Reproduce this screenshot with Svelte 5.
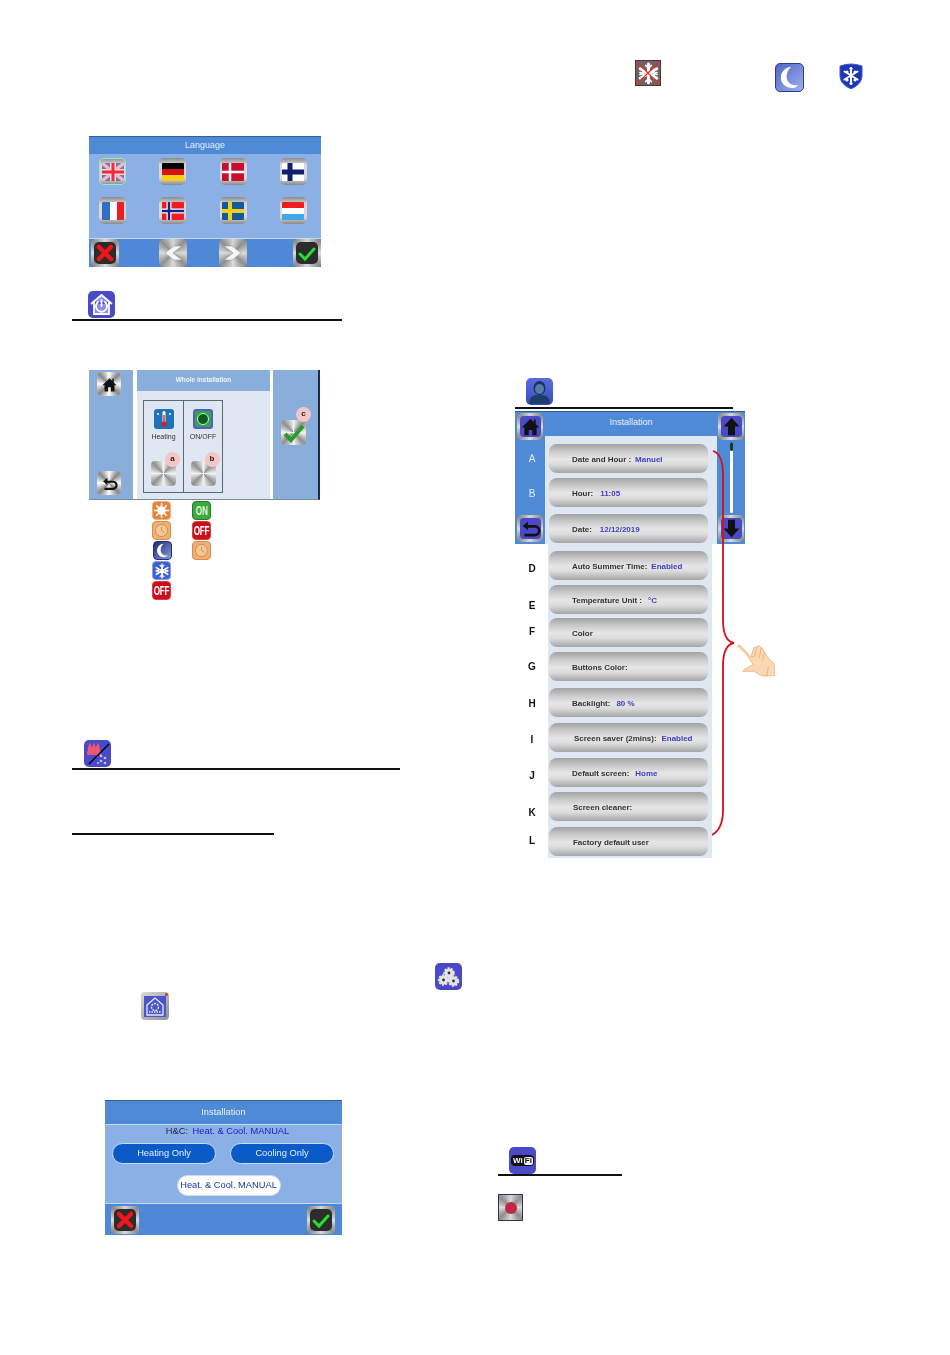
<script>
const flagsTop = ['uk', 'de', 'dk', 'fi']
const flagsBottom = ['fr', 'no', 'se', 'lu']

const rows = [
    {key: 'A', label: 'Date and Hour :', value: 'Manuel', gap: 0, dy: 0, light: true},
    {key: 'B', label: 'Hour:', value: '11:05', gap: 5, dy: 1, tab: 3, light: true},
    {key: 'C', label: 'Date:', value: '12/12/2019', gap: 7, dy: 0, tab: 4, noKey: true},
    {key: 'D', label: 'Auto Summer Time:', value: 'Enabled', gap: 8, dy: 3},
    {key: 'E', label: 'Temperature Unit :', value: '°C', gap: 5, dy: 6, tab: 2},
    {key: 'F', label: 'Color', gap: 4, dy: -1},
    {key: 'G', label: 'Buttons Color:', gap: 5, dy: 0},
    {key: 'H', label: 'Backlight:', value: '80 %', gap: 7, dy: 1, tab: 2},
    {key: 'I', label: 'Screen saver (2mins):', value: 'Enabled', gap: 6, dy: 2, pad: 25, tab: 1},
    {key: 'J', label: 'Default screen:', value: 'Home', gap: 6, dy: 3, tab: 2},
    {key: 'K', label: 'Screen cleaner:', gap: 5, dy: 6, pad: 24},
    {key: 'L', label: 'Factory default user', gap: 6, dy: -1, pad: 24},
]

const loose = [
    {kind: 'crossed', x: 635, y: 60, s: 26},
    {kind: 'moon', x: 775, y: 63, s: 29},
    {kind: 'shield', x: 838, y: 63, s: 26},
    {kind: 'power', x: 88, y: 291, s: 27},
    {kind: 'heatcool', x: 84, y: 740, s: 27},
    {kind: 'gears', x: 435, y: 963, s: 27},
    {kind: 'house', x: 141, y: 992, s: 28},
    {kind: 'user', x: 526, y: 378, s: 27},
    {kind: 'wifi', x: 509, y: 1147, s: 27},
]

const rules = [
    {x: 72, y: 319, w: 270},
    {x: 72, y: 768, w: 328},
    {x: 72, y: 833, w: 202},
    {x: 515, y: 407, w: 218},
    {x: 498, y: 1174, w: 124},
]
</script>

{#snippet flake(size, width = 2.4)}
    <svg width={size} height={size} viewBox="0 0 24 24" fill="none" stroke="#fff" stroke-width={width} stroke-linecap="round">
        <path d="M12 2v20M3.300 7l17.400 10M3.300 17l17.400-10" />
        <path d="M9 3.500l3 3 3-3M9 20.500l3-3 3 3M3 11l4 1-1-4M21 13l-4-1 1 4M3 13l4-1-1 4M21 11l-4 1 1-4" stroke-width="1.600" />
    </svg>
{/snippet}

{#snippet clockFace()}
    <svg width="15" height="15" viewBox="0 0 16 16" fill="#f4c890" stroke="#d08a50" stroke-width="1">
        <circle cx="8" cy="8" r="6.500" />
        <path d="M8 4v4l3 2" fill="none" />
    </svg>
{/snippet}

{#snippet flag(kind)}
    <svg class="flag" width="22" height="18" viewBox="0 0 22 18">
        {#if kind === 'uk'}
            <rect width="22" height="18" fill="#6a78b8" />
            <path d="M0 0l22 18M22 0L0 18" stroke="#eeb8c4" stroke-width="3.500" />
            <path d="M11 0v18M0 9h22" stroke="#f4d4d8" stroke-width="6" />
            <path d="M11 0v18M0 9h22" stroke="#ee2c38" stroke-width="3" />
        {:else if kind === 'de'}
            <rect width="22" height="6" fill="#000" />
            <rect y="6" width="22" height="6" fill="#d8101c" />
            <rect y="12" width="22" height="6" fill="#f8d010" />
        {:else if kind === 'dk'}
            <rect width="22" height="18" fill="#c8102e" />
            <path d="M8 0v18M0 9h22" stroke="#fff" stroke-width="2.500" />
        {:else if kind === 'fi'}
            <rect width="22" height="18" fill="#fff" />
            <path d="M8 0v18M0 9h22" stroke="#10206c" stroke-width="5" />
        {:else if kind === 'fr'}
            <rect width="8" height="18" fill="#2f6fc8" />
            <rect x="8" width="7" height="18" fill="#fff" />
            <rect x="15" width="7" height="18" fill="#f01c24" />
        {:else if kind === 'no'}
            <rect width="22" height="18" fill="#f01c24" />
            <path d="M7 0v18M0 9h22" stroke="#fff" stroke-width="5" />
            <path d="M7 0v18M0 9h22" stroke="#10288c" stroke-width="2.500" />
        {:else if kind === 'se'}
            <rect width="22" height="18" fill="#0f5aa0" />
            <path d="M8 0v18M0 9h22" stroke="#f8d010" stroke-width="4" />
        {:else}
            <rect width="22" height="6" fill="#f01c24" />
            <rect y="6" width="22" height="6" fill="#fff" />
            <rect y="12" width="22" height="6" fill="#40a8e8" />
        {/if}
    </svg>
{/snippet}

{#snippet action(kind)}
    <div class="metal act">
        <div class="act-in">
            <svg width="22" height="22" viewBox="0 0 22 22" fill="none" stroke-linecap="round">
                {#if kind === 'no'}
                    <path d="M5 5l12 12M17 5L5 17" stroke="#f0141c" stroke-width="4.500" />
                {:else}
                    <path d="M4 12l5 5L18 7" stroke="#22e02c" stroke-width="3" />
                {/if}
            </svg>
        </div>
    </div>
{/snippet}

{#snippet chevron(dir)}
    <div class="metal act">
        <svg width="24" height="24" viewBox="0 0 24 24">
            {#if dir === 'left'}
                <path d="M21 5H13L4 12l9 7h8l-9-7z" fill="#f6f6f6" stroke="#999" stroke-width=".6" />
            {:else}
                <path d="M3 5h8l9 7-9 7H3l9-7z" fill="#f6f6f6" stroke="#999" stroke-width=".6" />
            {/if}
        </svg>
    </div>
{/snippet}

{#snippet navGlyph(kind, blue)}
    <div class="metal nav" class:nav-blue={blue}>
        <svg viewBox="0 0 24 24">
            {#if kind === 'home'}
                <path d="M12 3L2 13h3v9h5v-6h4v6h5v-9h3l-4-4V4h-2v3z" fill="#111" />
            {:else if kind === 'back'}
                <path d="M9 4L3 9l6 5v-3h8a3.400 3.400 0 010 7H5v3h12a6.400 6.400 0 000-13H9z" fill="#111" />
            {:else if kind === 'up'}
                <path d="M12 2L3 12h5v10h8V12h5z" fill="#111" />
            {:else}
                <path d="M12 22L3 12h5V2h8v10h5z" fill="#111" />
            {/if}
        </svg>
    </div>
{/snippet}

{#snippet icon(kind, s)}
    {#if kind === 'moon'}
        <div class="tile moon" style="width:{s}px;height:{s}px">
            <svg width="100%" height="100%" viewBox="0 0 28 28"><path d="M16 3a11 11 0 100 22c3 0 5-1 7-3-7 1-12-3-12-9 0-4 2-8 5-10z" fill="#fff" /></svg>
        </div>
    {:else if kind === 'shield'}
        <div class="plain" style="width:{s}px;height:{s}px">
            <svg width="100%" height="100%" viewBox="0 0 26 26">
                <path d="M2 3q11-4 22 0v10q0 8-11 13Q2 21 2 13z" fill="#1f35b8" stroke="#3f55d8" />
                <circle cx="9" cy="9" r="1.600" fill="#fff" /><circle cx="17" cy="9" r="1.600" fill="#fff" /><circle cx="9" cy="17" r="1.600" fill="#fff" /><circle cx="17" cy="17" r="1.600" fill="#fff" /><circle cx="13" cy="5.500" r="1.600" fill="#fff" /><circle cx="13" cy="20.500" r="1.600" fill="#fff" />
                <g fill="none" stroke="#fff" stroke-width="2" stroke-linecap="round"><path d="M13 5v15M6.500 8.500l13 8M6.500 16.500l13-8" /></g>
            </svg>
        </div>
    {:else if kind === 'crossed'}
        <div class="tile crossed" style="width:{s}px;height:{s}px">
            {@render flake(23, 3)}
            <svg class="over" width="100%" height="100%" viewBox="0 0 26 26"><path d="M1 1l24 24M25 1L1 25" stroke="#e82c2c" stroke-width="1.400" /></svg>
        </div>
    {:else if kind === 'power'}
        <div class="tile indigo" style="width:{s}px;height:{s}px">
            <svg width="100%" height="100%" viewBox="0 0 27 27" fill="none" stroke="#fff" stroke-width="1.800">
                <path d="M3 13L13.500 4 24 13M6 11v12h15V11" fill="#8e8ee8" />
                <path d="M10 11a5.500 5.500 0 107 0M13.500 9v6" stroke-linecap="round" />
            </svg>
        </div>
    {:else if kind === 'heatcool'}
        <div class="tile indigo" style="width:{s}px;height:{s}px">
            <svg width="100%" height="100%" viewBox="0 0 27 27">
                <rect x="3" y="11" width="14" height="4" rx="1" fill="#f05870" />
                <path d="M5 11q-1-3 1-6 1 3 1 6M9 11q-1-3 1-6 1 3 1 6M13 11q-1-3 1-6 1 3 1 6" fill="#f05870" stroke="#f05870" stroke-width="2" />
                <path d="M5 24L25 4" stroke="#000" stroke-width="1.200" />
                <g fill="#b8c8ff"><circle cx="17" cy="16" r="1.300" /><circle cx="21" cy="18" r="1.300" /><circle cx="17" cy="21" r="1.300" /><circle cx="21" cy="23" r="1.300" /><circle cx="14" cy="23" r="1" /></g>
            </svg>
        </div>
    {:else if kind === 'gears'}
        <div class="tile indigo" style="width:{s}px;height:{s}px">
            <svg width="100%" height="100%" viewBox="0 0 27 27">
                <g fill="#e4e4e4" stroke="#e4e4e4" stroke-width="2.400" stroke-dasharray="2 1.200">
                    <circle cx="14" cy="10" r="4.500" /><circle cx="8.500" cy="17" r="4.500" /><circle cx="18.500" cy="18" r="4.500" />
                </g>
                <g fill="#333"><circle cx="14" cy="10" r="1.400" /><circle cx="8.500" cy="17" r="1.400" /><circle cx="18.500" cy="18" r="1.400" /></g>
            </svg>
        </div>
    {:else if kind === 'house'}
        <div class="metal-edge" style="width:{s}px;height:{s}px">
            <svg width="100%" height="100%" viewBox="0 0 28 28" fill="none" stroke="#e8ecff" stroke-width="1.300">
                <rect x="3" y="4" width="22" height="21" fill="#4a55c8" stroke="none" />
                <path d="M6 13l8-7 8 7v10H6z" />
                <circle cx="14" cy="15" r="3.500" stroke-dasharray="2 1" />
                <path d="M8 20h12" stroke-dasharray="1.500 1" />
                <circle cx="25.500" cy="2.500" r="1.500" fill="#c8401c" stroke="none" />
            </svg>
        </div>
    {:else if kind === 'user'}
        <div class="tile user" style="width:{s}px;height:{s}px">
            <svg width="100%" height="100%" viewBox="0 0 27 27">
                <ellipse cx="13.500" cy="10" rx="6" ry="7" fill="#16365c" />
                <ellipse cx="13.500" cy="11" rx="4.500" ry="5" fill="#5a7aa8" />
                <path d="M3 26q0-8 7-9h7q7 1 7 9z" fill="#1c3f6c" />
            </svg>
        </div>
    {:else if kind === 'wifi'}
        <div class="tile indigo wifi" style="width:{s}px;height:{s}px">
            <span class="wifi-pill"><b>Wi</b><i>Fi</i></span>
        </div>
    {/if}
{/snippet}

<div class="page">
    {#each rules as r}
        <div class="rule" style="left:{r.x}px;top:{r.y}px;width:{r.w}px"></div>
    {/each}

    {#each loose as i}
        <div class="loose" style="left:{i.x}px;top:{i.y}px">
            {@render icon(i.kind, i.s)}
        </div>
    {/each}

    <!-- language screen -->
    <section class="fig lang">
        <header class="bar-title">Language</header>
        <div class="lang-grid">
            {#each flagsTop.concat(flagsBottom) as f}
                <div class="metal flag-btn" class:flag-sel={f === 'uk'}>
                    {@render flag(f)}
                </div>
            {/each}
        </div>
        <footer class="lang-foot">
            {@render action('no')}
            {@render chevron('left')}
            {@render chevron('right')}
            {@render action('ok')}
        </footer>
    </section>

    <!-- whole installation screen -->
    <section class="fig whole">
        <div class="w-side">
            {@render navGlyph('home')}
            {@render navGlyph('back')}
        </div>
        <div class="w-main">
            <header class="w-title">Whole installation</header>
            <div class="w-box">
                <div class="w-cell">
                    <div class="w-ico therm">
                        <svg width="20" height="20" viewBox="0 0 20 20">
                            <rect x="8.500" y="2" width="3" height="12" rx="1.500" fill="#fff" />
                            <rect x="9.300" y="6" width="1.400" height="9" fill="#d82020" />
                            <circle cx="10" cy="15" r="2.600" fill="#d82020" />
                            <circle cx="4" cy="5" r="1" fill="#fff" /><circle cx="16" cy="5" r="1" fill="#fff" />
                        </svg>
                    </div>
                    <span>Heating</span>
                    <div class="fan"><em>a</em></div>
                </div>
                <div class="w-cell">
                    <div class="w-ico onoff"><i></i></div>
                    <span>ON/OFF</span>
                    <div class="fan"><em>b</em></div>
                </div>
            </div>
        </div>
        <div class="w-right">
            <div class="fan fan-ok">
                <svg width="25" height="25" viewBox="0 0 25 25"><path d="M4 14l6 6L22 6" fill="none" stroke="#2a9a2a" stroke-width="4" /></svg>
                <em>c</em>
            </div>
        </div>
    </section>

    <div class="modes modes-a">
        <div class="mini sun">
            <svg width="15" height="15" viewBox="0 0 16 16"><g stroke="#fff" stroke-width="1.500"><path d="M8 0v16M0 8h16M2.300 2.300l11.400 11.400M13.700 2.300L2.300 13.700" /></g><circle cx="8" cy="8" r="4.500" fill="#fff" /></svg>
        </div>
        <div class="mini clock">{@render clockFace()}</div>
        <div class="mini moon-mini">
            <svg width="17" height="17" viewBox="0 0 28 28"><path d="M16 3a11 11 0 100 22c3 0 5-1 7-3-7 1-12-3-12-9 0-4 2-8 5-10z" fill="#fff" /></svg>
        </div>
        <div class="mini snow">{@render flake(16)}</div>
        <div class="mini off"><span>OFF</span></div>
    </div>
    <div class="modes modes-b">
        <div class="mini on"><span>ON</span></div>
        <div class="mini off"><span>OFF</span></div>
        <div class="mini clock">{@render clockFace()}</div>
    </div>

    <!-- installation list -->
    <section class="fig inst">
        <div class="inst-blue"></div>
        <div class="inst-panel"></div>
        <div class="inst-panel-top"></div>
        <header class="inst-head">Installation</header>
        <div class="inst-side inst-left">
            {@render navGlyph('home', true)}
            {@render navGlyph('back', true)}
        </div>
        <div class="inst-side inst-right">
            {@render navGlyph('up', true)}
            <div class="scroll"><i></i></div>
            {@render navGlyph('down', true)}
        </div>
        <div class="inst-rows">
            {#each rows as row}
                <div class="inst-row" style="margin-top:{row.gap}px">
                    <span class="key" class:key-light={row.light} style="transform:translateY({row.dy}px)">{row.noKey ? '' : row.key}</span>
                    <div class="pill-btn" style="padding-left:{row.pad ?? 23}px">
                        <span>{row.label}</span>
                        {#if row.value}<span class="val" style="margin-left:{row.tab ?? 0}px">{row.value}</span>{/if}
                    </div>
                </div>
            {/each}
        </div>
    </section>

    <svg class="brace" width="30" height="395" viewBox="0 0 30 395" fill="none">
        <path d="M1 1q10 3 10 24V170q0 21 11 23q-11 2-11 23V360q0 19-11 25" stroke="#d4101c" stroke-width="1.800" />
    </svg>

    <svg class="hand" width="42" height="35" viewBox="690 100 125 105" stroke="#eda268" stroke-width="2">
        <path d="M697 108q8-4 15 6l25 28 10-30 7 2 3-6 11 4 4 6 19 30 16 14 1 36-36 1-26-14-33 0 5-6 26-14-18-28q-20-20-29-29z" fill="#fbd8b4" />
        <path d="M737 142l10-2M754 114l-5 28M768 116l-6 30M778 128l-6 26" fill="none" />
        <path d="M790 172l-6 28" fill="none" />
    </svg>

    <!-- heat and cool screen -->
    <section class="fig hc">
        <header class="hc-title">Installation</header>
        <div class="hc-body">
            <p class="hc-state"><b>H&amp;C:</b> <span>Heat. &amp; Cool. MANUAL</span></p>
            <div class="hc-pills">
                <div class="hc-pill">Heating Only</div>
                <div class="hc-pill">Cooling Only</div>
            </div>
            <div class="hc-pill hc-pill-on">Heat. &amp; Cool. MANUAL</div>
        </div>
        <footer class="hc-foot">
            {@render action('no')}
            {@render action('ok')}
        </footer>
    </section>

    <div class="metal rec"><i></i></div>
</div>

<style>
:global(body) {
    background: #fff;
    font-family: "Liberation Sans", Arial, sans-serif;
}

.page {
    position: relative;
    width: 950px;
    height: 1355px;
    background: #fff;
    overflow: hidden;
}

.fig, .loose, .rule, .brace, .hand, .modes, .rec {
    position: absolute;
}

/* the source is a scaled-down bitmap, everything is slightly soft */
.fig, .loose, .modes, .rec, .hand {
    filter: blur(.35px);
}

.whole, .modes {
    filter: blur(.5px);
}

.rule {
    height: 2px;
    background: #111;
}

.loose svg { display: block; }

/* shared buttons */
.metal {
    display: flex;
    align-items: center;
    justify-content: center;
    box-sizing: border-box;
    border-radius: 5px;
    background: conic-gradient(#d8d8d8, #8f8f8f, #dcdcdc, #8f8f8f, #dcdcdc, #8f8f8f, #dcdcdc, #8f8f8f, #d8d8d8);
}

.act {
    width: 28px;
    height: 28px;
}

.act-in {
    display: flex;
    align-items: center;
    justify-content: center;
    width: 22px;
    height: 22px;
    border-radius: 5px;
    background: #2c2c2c;
}

/* language */
.lang {
    left: 89px;
    top: 136px;
    width: 232px;
    height: 131px;
    display: flex;
    flex-direction: column;
    background: #8ab0e6;
    border-top: 1px solid #2f5f9f;
    box-sizing: border-box;
}

.bar-title {
    height: 17px;
    line-height: 17px;
    text-align: center;
    color: #e8f0fa;
    font-size: 9px;
    background: #4f8ad6;
}

.lang-grid {
    display: grid;
    grid-template-columns: repeat(4, 27px);
    grid-template-rows: 27px 27px;
    justify-content: space-between;
    row-gap: 12px;
    padding: 4px 14px 0 10px;
    flex: 1;
}

.flag-btn {
    width: 27px;
    height: 27px;
    background: linear-gradient(#8a8a8a, #d8d8d8 25%, #d8d8d8 75%, #8a8a8a);
}

.flag-sel { box-shadow: 0 0 0 1px #9fe8c8 inset; }

.flag { border-radius: 1px; }

.lang-foot {
    height: 29px;
    display: flex;
    background: #5088d8;
    border-top: 1px solid #c8d8f0;
    padding: 0 0 0 2px;
    align-items: center;
    box-sizing: border-box;
}

.lang-foot :global(.act:nth-child(2)) { margin-left: 40px; }
.lang-foot :global(.act:nth-child(3)) { margin-left: 32px; }
.lang-foot :global(.act:nth-child(4)) { margin-left: 46px; }

/* whole installation */
.whole {
    left: 89px;
    top: 370px;
    width: 231px;
    height: 130px;
    display: flex;
    background: #fff;
    border-bottom: 1px solid #7a8a9a;
    border-right: 2px solid #1c2c44;
    box-sizing: border-box;
}

.w-side {
    width: 44px;
    background: #8aaedc;
    display: flex;
    flex-direction: column;
    justify-content: space-between;
    align-items: center;
    padding: 2px 12px 4px 8px;
    box-sizing: border-box;
}

.w-side :global(.nav) {
    width: 24px;
    height: 24px;
    background: conic-gradient(#fff, #888, #fff, #888, #fff, #888, #fff, #888, #fff);
}

.w-side :global(.nav svg) {
    width: 17px;
    height: 17px;
}

.w-main {
    margin-left: 4px;
    width: 133px;
    background: #dfe7f3;
}

.w-title {
    height: 21px;
    line-height: 20px;
    background: #8aaedc;
    color: #f0f4fa;
    text-align: center;
    font-size: 6.5px;
    font-weight: bold;
}

.w-box {
    margin: 9px 0 0 6px;
    width: 80px;
    height: 93px;
    display: grid;
    grid-template-columns: 1fr 1fr;
    border: 1px solid #5a6878;
    box-sizing: border-box;
}

.w-cell {
    display: flex;
    flex-direction: column;
    align-items: center;
    padding-top: 8px;
    font-size: 7px;
    color: #333;
}

.w-cell + .w-cell { border-left: 1px solid #5a6878; }

.w-cell span { margin-top: 4px; }

.w-ico {
    width: 20px;
    height: 20px;
    border-radius: 3px;
}

.therm { background: #1f72b8; }

.onoff {
    box-sizing: border-box;
    display: flex;
    align-items: center;
    justify-content: center;
    background: #2fa84a;
    border: 2px solid #5a58d0;
}

.onoff i {
    width: 12px;
    height: 12px;
    border-radius: 50%;
    background: #0f5a24;
    border: 1px solid #c0f0c0;
    box-sizing: border-box;
}

.fan {
    position: relative;
    width: 25px;
    height: 25px;
    margin-top: 21px;
    border-radius: 4px;
    background: conic-gradient(#f4f4f4, #909090, #f4f4f4, #909090, #f4f4f4, #909090, #f4f4f4, #909090, #f4f4f4);
}

.fan em {
    position: absolute;
    top: -9px;
    right: -4px;
    width: 15px;
    height: 15px;
    line-height: 14px;
    border-radius: 50%;
    background: #f4c6c6;
    color: #222;
    text-align: center;
    font-size: 8px;
    font-style: normal;
    font-weight: bold;
}

.w-right {
    margin-left: 3px;
    flex: 1;
    background: #8aaedc;
    padding: 50px 0 0 8px;
}

.fan-ok {
    margin: 0;
}

.fan-ok svg {
    display: block;
}

.fan-ok em {
    top: -13px;
    right: -5px;
}

/* mode icons */
.modes {
    top: 501px;
    display: flex;
    flex-direction: column;
    gap: 1px;
}

.modes-a { left: 152px; }
.modes-b { left: 192px; }

.mini {
    width: 19px;
    height: 19px;
    box-sizing: border-box;
    border-radius: 4px;
    display: flex;
    align-items: center;
    justify-content: center;
    color: #fff;
    font-size: 12px;
    font-weight: bold;
}

.mini span {
    transform: scaleX(.68);
    letter-spacing: -.3px;
}

.sun { background: #e8833c; border: 1px solid #eeb080; }
.clock { background: #eeb078; border: 1px solid #e08a40; }
.moon-mini { margin-left: 1px; border: 1px solid #22306c; background: linear-gradient(135deg, #1c2c74, #8a98e0); }
.snow { background: #4060d0; border: 1px solid #8aa0e8; }
.off { background: #c8101c; border: 1px solid #d84048; }
.on { background: #40a840; border: 1px solid #208020; color: #d8f8d8; }

/* big loose icons */
.tile {
    position: relative;
    box-sizing: border-box;
    border-radius: 5px;
    overflow: hidden;
}

.indigo { background: #4a4ac8; }
.moon {
    background: linear-gradient(135deg, #4f68c8, #a0aeea);
    border: 1px solid #2c3c88;
}
.crossed {
    display: flex;
    align-items: center;
    justify-content: center;
    border-radius: 0;
    background: #6c6464;
    border: 1px solid #5a3030;
}
.over { position: absolute; inset: 0; }
.user { background: linear-gradient(#5a6ce0, #3c4cc0); }
.metal-edge {
    background: linear-gradient(135deg, #d8d8d8, #909098);
    border-radius: 4px;
}
.wifi {
    display: flex;
    align-items: center;
    justify-content: center;
}
.wifi-pill {
    display: flex;
    align-items: center;
    height: 11px;
    padding: 0 1px;
    background: #111;
    border-radius: 4px;
    font-size: 8px;
    font-weight: bold;
    line-height: 1;
}
.wifi-pill b { color: #fff; padding: 0 1px; }
.wifi-pill i {
    color: #111;
    background: #eee;
    font-style: normal;
    padding: 0 1px;
    border-radius: 2px;
}

/* installation list */
.inst {
    left: 515px;
    top: 411px;
    width: 230px;
    height: 447px;
}

.inst-blue {
    position: absolute;
    inset: 0 0 auto 0;
    height: 133px;
    background: #4f8ad6;
    border-top: 1px solid #2f5f9f;
    box-sizing: border-box;
}

.inst-panel {
    position: absolute;
    top: 133px;
    left: 33px;
    width: 164px;
    height: 314px;
    background: #dfe7f3;
}

.inst-panel-top {
    position: absolute;
    top: 25px;
    left: 30px;
    width: 172px;
    height: 108px;
    background: #dfe7f3;
}

.inst-head {
    position: absolute;
    top: 0;
    left: 30px;
    width: 172px;
    height: 24px;
    line-height: 23px;
    text-align: center;
    color: #e8f0fa;
    font-size: 9px;
}

.inst-side {
    position: absolute;
    top: 2px;
    height: 129px;
    display: flex;
    flex-direction: column;
    justify-content: space-between;
    align-items: center;
    z-index: 1;
}

.inst-left { left: 2px; width: 26px; }
.inst-right { left: 203px; width: 26px; }

.nav {
    width: 26px;
    height: 27px;
}

.nav svg {
    width: 21px;
    height: 21px;
}

.nav-blue svg {
    background: #4a4ac8;
    border-radius: 4px;
}

.scroll {
    position: relative;
    width: 3px;
    height: 71px;
    background: #fff;
    border-radius: 2px;
}

.scroll i {
    position: absolute;
    top: 0;
    left: 0;
    width: 3px;
    height: 9px;
    background: #233;
    border-radius: 2px;
}

.inst-rows {
    position: absolute;
    top: 33px;
    left: 0;
    width: 193px;
    display: flex;
    flex-direction: column;
}

.inst-row {
    display: grid;
    grid-template-columns: 34px 159px;
    align-items: center;
    height: 29px;
}

.key {
    text-align: center;
    font-size: 10px;
    font-weight: bold;
    color: #111;
}

.key-light { color: #e0ebfa; font-weight: normal; }

.pill-btn {
    display: flex;
    align-items: center;
    gap: 4px;
    height: 29px;
    box-sizing: border-box;
    border-radius: 8px;
    background: linear-gradient(#a2a2a2, #c8c8c8 25%, #e6e6e6 52%, #dcdcdc 70%, #a6a6a6);
    font-size: 8px;
    font-weight: bold;
    letter-spacing: -.03px;
    color: #333;
    padding-top: 2px;
}

.val { color: #3c3cc8; }

.brace {
    left: 712px;
    top: 450px;
}

.hand {
    left: 735px;
    top: 643px;
}

/* heat and cool */
.hc {
    left: 105px;
    top: 1100px;
    width: 237px;
    height: 135px;
    display: flex;
    flex-direction: column;
    background: #8ab0e6;
    border-top: 1px solid #2f5f9f;
    box-sizing: border-box;
}

.hc-title {
    height: 23px;
    line-height: 22px;
    text-align: center;
    color: #e8f0fa;
    font-size: 9.300px;
    background: #4f8ad6;
    border-bottom: 1px solid #c8d8f0;
}

.hc-body {
    flex: 1;
    display: flex;
    flex-direction: column;
    align-items: center;
}

.hc-state {
    margin: 0 0 0 8px;
    height: 18px;
    line-height: 12px;
    font-size: 9.300px;
    color: #1a1f3a;
}

.hc-state b { font-weight: normal; }
.hc-state span { color: #1a1ac8; margin-left: 2px; }

.hc-pills {
    width: 222px;
    margin-left: -1px;
    display: flex;
    justify-content: space-between;
    margin-bottom: 11px;
}

.hc-pill {
    width: 104px;
    height: 21px;
    line-height: 19px;
    box-sizing: border-box;
    border-radius: 11px;
    background: #0a5ac8;
    border: 1px solid #c8dcf8;
    color: #e8f0ff;
    text-align: center;
    font-size: 9.300px;
    white-space: nowrap;
}

.hc-pill-on {
    margin-left: 10px;
    background: #fff;
    color: #1438a0;
}

.hc-foot {
    height: 32px;
    box-sizing: border-box;
    display: flex;
    justify-content: space-between;
    align-items: center;
    padding: 0 7px 0 6px;
    background: #5088d8;
    border-top: 1px solid #c8d8f0;
}

.rec {
    left: 498px;
    top: 1194px;
    width: 25px;
    height: 27px;
    border-radius: 1px;
    box-shadow: 0 0 0 1px #334 inset;
}

.rec i {
    width: 12px;
    height: 12px;
    border-radius: 50%;
    background: #c02848;
}
</style>
